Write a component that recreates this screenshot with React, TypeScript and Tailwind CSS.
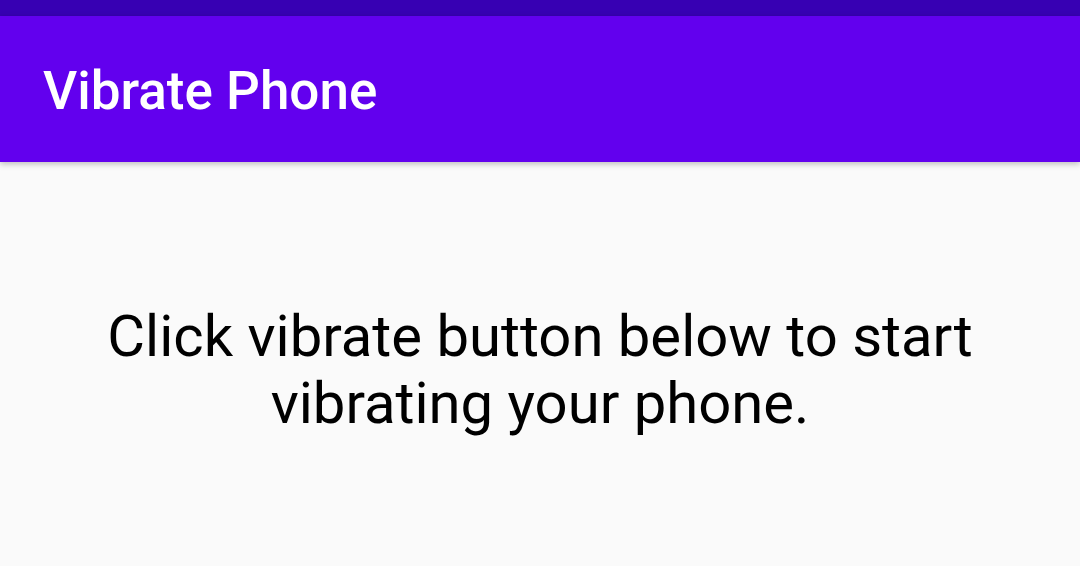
import React from "react";

export default function App() {
  return (
    <div className="flex h-[566px] w-[1080px] flex-col overflow-hidden bg-[#fafafa] font-['Roboto',sans-serif]">
      <div className="h-[16px] shrink-0 bg-[#3700b3]" />
      <header className="relative z-10 flex h-[146px] shrink-0 items-center bg-[#6200ee] px-[43px] pt-[4px] shadow-[0_2px_6px_rgba(0,0,0,0.25)]">
        <h1 className="text-[53px] font-medium leading-none text-white">Vibrate Phone</h1>
      </header>
      <main className="flex flex-1 flex-col items-center pt-[141px]">
        <p className="w-[900px] text-center text-[58px] leading-[67px] text-black">
          Click vibrate button below to start vibrating your phone.
        </p>
      </main>
    </div>
  );
}
